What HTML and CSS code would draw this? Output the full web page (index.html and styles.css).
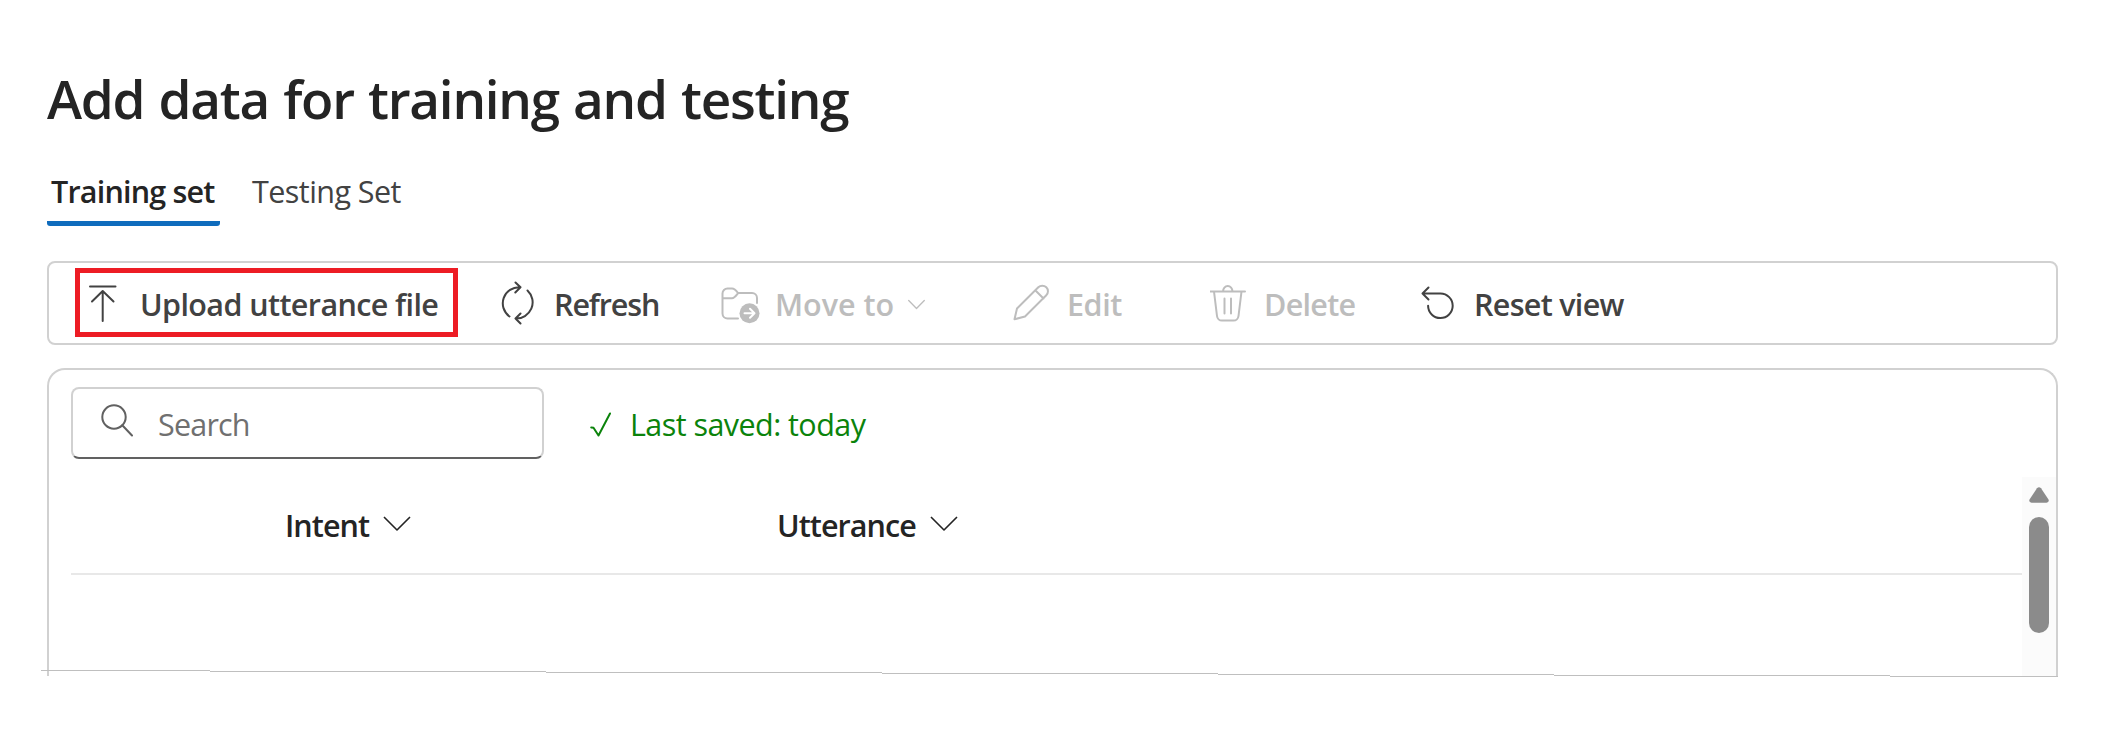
FILE: index.html
```html
<!DOCTYPE html>
<html lang="en">
    <head>
        <meta charset="UTF-8" />
        <title>Add data for training and testing</title>
        <link rel="stylesheet" href="styles.css">
    </head>
    <body>
        <div class="page">
            <h1>Add data for training and testing</h1>

            <div class="tabs">
                <a class="tab active">Training set</a>
                <a class="tab">Testing Set</a>
            </div>

            <div class="toolbar">
                <div class="tool upload">
                    <svg width="28" height="38" viewBox="0 0 28 38"><path d="M1 2.5h25.5M13.7 37V7.5M3 17.5L13.7 7L24.5 17.5"/></svg>
                    <span>Upload utterance file</span>
                </div>
                <div class="tool refresh">
                    <svg width="36" height="44" viewBox="0 0 36 44"><path d="M8.5 35.5A16.2 16.2 0 0 1 19 6.2M14.5 1.5l5 4.7l-5.2 5.3M26.5 9.5A16.2 16.2 0 0 1 14.5 37.5M19.5 32.5l-5 5l5 5"/></svg>
                    <span>Refresh</span>
                </div>
                <div class="tool move disabled">
                    <svg width="39" height="38" viewBox="0 0 39 38"><path d="M17 31.5H6.5a5 5 0 0 1-5-5V6.5a5 5 0 0 1 5-5H11c2.5 0 3.5 1 6 4.5h14a5 5 0 0 1 5 5V16M1.5 11.2H11c2.5 0 3.5-1.7 6-5"/><circle class="dot" cx="28.5" cy="26.2" r="10"/><path class="arrow" d="M23.5 26.2h9.5M29 21.7l4.5 4.5l-4.5 4.5"/></svg>
                    <span>Move to</span>
                    <svg class="chevron" width="17" height="12" viewBox="0 0 17 12"><path d="M.7 1.5l7.8 8l7.8-8"/></svg>
                </div>
                <div class="tool edit disabled">
                    <svg width="37" height="37" viewBox="0 0 37 37"><path d="M1.5 35.3L4 24.5L25.3 3.3a5.6 5.6 0 0 1 8 8L12 32.5zM22.5 6.5l8 8"/></svg>
                    <span>Edit</span>
                </div>
                <div class="tool delete disabled">
                    <svg width="36" height="38" viewBox="0 0 36 38"><path d="M.5 7.5H35M13 7.5a4.7 5.5 0 0 1 9.5 0M4 7.5l3 24.5a5 5 0 0 0 5 4.500h11.500a5 5 0 0 0 5-4.500L31.500 7.500M14.500 14.500v15M21 14.500v15"/></svg>
                    <span>Delete</span>
                </div>
                <div class="tool reset">
                    <svg width="34" height="34" viewBox="0 0 34 34"><path d="M7.5 1.5l-6 6l6 6M1.5 7.5h18a12.3 12.3 0 1 1-12.4 12.3"/></svg>
                    <span>Reset view</span>
                </div>
            </div>

            <div class="panel">
                <div class="search-row">
                    <div class="search">
                        <svg width="32" height="34" viewBox="0 0 32 34"><circle cx="13" cy="13" r="11.7"/><path d="M21.3 21.3L31 31.5"/></svg>
                        <span>Search</span>
                    </div>
                    <div class="saved">
                        <svg width="22" height="25" viewBox="0 0 22 25"><path d="M1.2 15.5l2.3 .3l5 7.7L20 1.5"/></svg>
                        <span>Last saved: today</span>
                    </div>
                </div>
                <div class="content">
                    <div class="table">
                        <div class="table-head">
                            <div class="col intent">
                                <span>Intent</span>
                                <svg width="28" height="16" viewBox="0 0 28 16"><path d="M1 1l13 13l13-13"/></svg>
                            </div>
                            <div class="col utterance">
                                <span>Utterance</span>
                                <svg width="28" height="16" viewBox="0 0 28 16"><path d="M1 1l13 13l13-13"/></svg>
                            </div>
                        </div>
                    </div>
                    <div class="scrollbar">
                        <svg width="20" height="16" viewBox="0 0 20 16"><path d="M8 1.2q2-2 4 0L19.5 12.5q1 3-2 3.2H2.5q-3-.2-2-3.2z"/></svg>
                        <div class="thumb"></div>
                    </div>
                </div>
                <svg class="cut" width="2017" height="8" viewBox="0 0 2017 8"><path d="M0 0h169v1H0zM169 1h336v1H169zM505 2h336v1H505zM841 3h336v1H841zM1177 4h336v1H1177zM1513 5h336v1H1513zM1849 6h168v1H1849z"/></svg>
            </div>
        </div>
    </body>
</html>
```
FILE: styles.css
```css
body {
    margin: 0;
    min-height: 748px;
    background-color: #fff;
    font-family: "Open Sans", "Noto Sans", sans-serif;
    font-size: 30.5px;
    line-height: 42px;
    letter-spacing: -0.55px;
    color: #424242;
    white-space: nowrap;
}

svg {
    flex: none;
    fill: none;
    stroke: currentColor;
    stroke-width: 2;
    stroke-linecap: round;
    stroke-linejoin: round;
}

.page {
    width: 2011px;
    padding: 63px 0 0 47px;
}

h1 {
    margin: 0;
    height: 73px;
    line-height: 72px;
    font-size: 53px;
    font-weight: 600;
    letter-spacing: -1.25px;
    word-spacing: 1.7px;
    color: #242424;
}

.tabs {
    display: flex;
    gap: 27px;
    padding-top: 34px;
}
.tab {
    height: 51px;
    padding: 0 5px;
    border-bottom: 5px solid transparent;
}
.tab.active {
    width: 164px;
    padding-left: 4px;
    font-weight: 600;
    letter-spacing: -0.8px;
    color: #242424;
    background: linear-gradient(#0f6cbd, #0f6cbd) no-repeat bottom / 100% 5px;
    background-origin: border-box;
    background-clip: border-box;
    border-radius: 3px;
}

.toolbar {
    display: flex;
    align-items: center;
    box-sizing: border-box;
    height: 84px;
    margin-top: 35px;
    padding-left: 26px;
    border: 2px solid #d1d1d1;
    border-radius: 8px;
}
.tool {
    display: flex;
    align-items: center;
    box-sizing: border-box;
    height: 69px;
    font-weight: 600;
    letter-spacing: -0.7px;
}
.tool span {
    padding-top: 2px;
}
.disabled {
    color: #bdbdbd;
}
.upload {
    width: 383px;
    margin-bottom: 1px;
    padding-left: 9px;
    gap: 23px;
    border: 5px solid #ed1c24;
    letter-spacing: -0.6px;
}
.refresh {
    width: 220px;
    margin-left: 43px;
    gap: 17px;
    letter-spacing: -1.1px;
}
.move {
    width: 292px;
    gap: 15px;
    letter-spacing: 0;
}
.move svg {
    margin-top: 6px;
}
.move span {
    width: 117px;
}
.move .dot {
    fill: #bdbdbd;
    stroke: none;
}
.move .arrow {
    stroke: #fff;
}
.move .chevron {
    margin-top: 4px;
    margin-left: 1px;
    stroke-width: 1.3;
}
.edit {
    width: 197px;
    gap: 17px;
    letter-spacing: -0.4px;
}
.edit svg, .delete svg {
    margin-bottom: 1px;
}
.delete {
    width: 211px;
    gap: 18px;
}
.reset {
    gap: 19px;
}

.panel {
    position: relative;
    box-sizing: border-box;
    height: 308px;
    margin-top: 23px;
    padding: 17px 0 0 22px;
    border: 2px solid #d1d1d1;
    border-bottom: none;
    border-radius: 18px 18px 0 0;
}
.search-row {
    display: flex;
    align-items: center;
}
.search {
    display: flex;
    align-items: center;
    box-sizing: border-box;
    width: 473px;
    height: 72px;
    padding-left: 28px;
    gap: 25px;
    border: 2px solid #d1d1d1;
    border-bottom-color: #616161;
    border-radius: 8px;
    letter-spacing: -0.8px;
    color: #707070;
}
.search span, .saved span {
    padding-top: 2px;
}
.search svg {
    margin-bottom: 4px;
    color: #616161;
}
.saved {
    display: flex;
    align-items: center;
    margin-left: 46px;
    gap: 18px;
    color: #0b830b;
}
.saved svg {
    margin-top: 2px;
}

.content {
    display: flex;
    height: 199px;
    margin-top: 18px;
}
.table {
    flex: 1;
}
.table-head {
    display: flex;
    height: 96px;
    border-bottom: 2px solid #e8e8e8;
    font-weight: 600;
    letter-spacing: -0.95px;
    color: #242424;
}
.col {
    display: flex;
    align-items: center;
    gap: 14px;
}
.col span {
    margin-bottom: 1px;
}
.col svg {
    stroke-width: 1.6;
    stroke-linecap: butt;
    margin-bottom: 3px;
}
.intent {
    width: 492px;
    padding-left: 214px;
}
.scrollbar {
    width: 20px;
    padding: 10px 7px 0;
    background-color: #fbfbfb;
}
.scrollbar svg {
    display: block;
    fill: #8b8b8b;
    stroke: none;
}
.thumb {
    height: 116px;
    margin-top: 14px;
    border-radius: 10px;
    background-color: #8b8b8b;
}

/* edge where the panel is cut off, drops one pixel per segment */
.cut {
    position: absolute;
    left: -8px;
    top: 300px;
    fill: #bfbfbf;
    stroke: none;
}
```
